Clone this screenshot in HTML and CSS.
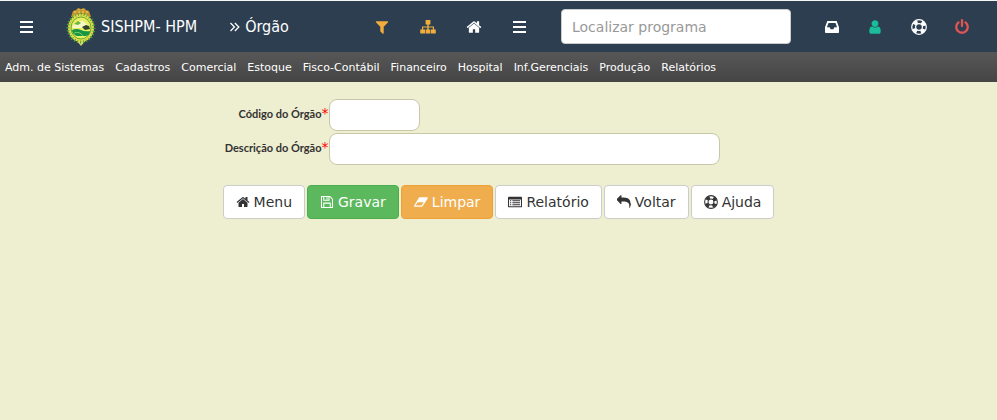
FILE: index.html
```html
<!DOCTYPE html>
<html lang="pt-BR">

<head>
    <meta charset="UTF-8">
    <meta name="viewport" content="width=device-width, initial-scale=1.0">
    <title>SISHPM - Órgão</title>
    <link rel="stylesheet" href="styles.css">
</head>

<body>
    <!-- icons -->
    <svg class="sprite" aria-hidden="true">
        <symbol id="i-bars" viewBox="0 0 16 16">
            <path d="M1 2h13v2H1zM1 7h13v2H1zM1 12h13v2H1z" />
        </symbol>
        <symbol id="i-angles" viewBox="0 0 16 16">
            <path d="M4 3.500l4.500 4.500L4 12.500M9 3.500l4.500 4.500L9 12.500" fill="none" stroke="currentColor" stroke-width="1.500" />
        </symbol>
        <symbol id="i-filter" viewBox="0 0 1792 1792">
            <path d="M1595 295q17 41-14 70l-493 493v742q0 42-39 59-13 5-25 5-27 0-45-19l-256-256q-19-19-19-45v-486l-493-493q-31-29-14-70 17-39 59-39h1280q42 0 59 39z" />
        </symbol>
        <symbol id="i-sitemap" viewBox="0 0 16 16">
            <path d="M5.600 1h4.800v4.600H8.700v1.800H14v3h1.800v4.100h-4.800v-4.100h1.800V8.600H8.700v1.800h1.700v4.100H5.600v-4.100h1.700V8.600H3.200v1.800H5v4.100H.2v-4.100H2v-3h5.300V5.600H5.600z" />
        </symbol>
        <symbol id="i-home" viewBox="0 0 1792 1792">
            <path d="M1472 992v480q0 26-19 45t-45 19h-384v-384h-256v384h-384q-26 0-45-19t-19-45v-480q0-1 .5-3t.5-3l575-474 575 474q1 2 1 6zm223-69l-62 74q-8 9-21 11h-3q-13 0-21-7l-692-577-692 577q-12 8-24 7-13-2-21-11l-62-74q-8-10-7-23.500t11-21.500l719-599q32-26 76-26t76 26l244 204v-195q0-14 9-23t23-9h192q14 0 23 9t9 23v408l219 182q10 8 11 21.500t-7 23.500z" />
        </symbol>
        <symbol id="i-inbox" viewBox="0 0 16 16">
            <path fill-rule="evenodd" d="M3.300 2h9.400l2.300 6.300V13.200q0 .8-.8.8H1.800q-.8 0-.8-.8V8.300zM4.500 4L2.900 8.300h2.700l1 2h2.800l1-2h2.700L11.500 4z" />
        </symbol>
        <symbol id="i-user" viewBox="0 0 1792 1792">
            <path d="M1536 1399q0 109-62.500 187t-150.500 78h-854q-88 0-150.500-78t-62.500-187q0-85 8.500-160.500t31.500-152 58.500-131 94-89 134.500-34.500q131 128 313 128t313-128q76 0 134.500 34.500t94 89 58.500 131 31.500 152 8.500 160.500zm-256-887q0 159-112.500 271.500t-271.500 112.500-271.500-112.500-112.500-271.500 112.500-271.500 271.500-112.500 271.500 112.500 112.500 271.500z" />
        </symbol>
        <symbol id="i-ring" viewBox="0 0 16 16">
            <g fill="none" stroke="currentColor">
                <circle cx="8" cy="8" r="7.300" stroke-width="1.200" />
                <circle cx="8" cy="8" r="3.400" stroke-width="1.200" />
                <circle cx="8" cy="8" r="5.400" stroke-width="3.400" stroke-dasharray="4.240 4.240" stroke-dashoffset="-2.120" />
            </g>
        </symbol>
        <symbol id="i-power" viewBox="0 0 1792 1792">
            <path d="M1664 896q0 156-61 298t-164 245-245 164-298 61-298-61-245-164-164-245-61-298q0-182 80.500-343t226.500-270q43-32 95.500-25t83.500 50q32 42 24.500 94.500t-49.500 84.500q-98 74-151.500 181t-53.500 228q0 104 40.500 198.500t109.500 163.500 163.500 109.500 198.500 40.500 198.500-40.500 163.500-109.500 109.500-163.500 40.500-198.500q0-121-53.500-228t-151.500-181q-42-32-49.500-84.500t24.500-94.500q31-43 84-50t95 25q146 109 226.500 270t80.500 343zm-640-768v640q0 52-38 90t-90 38-90-38-38-90v-640q0-52 38-90t90-38 90 38 38 90z" />
        </symbol>
        <symbol id="i-save" viewBox="0 0 16 16">
            <path d="M1.700 1.700h9.600l3 3v9.600H1.700zM4.300 14V9.300h7.400V14M4.300 2v4h6V2M8 2.500v2.500" fill="none" stroke="currentColor" stroke-width="1.200" />
        </symbol>
        <symbol id="i-eraser" viewBox="0 0 16 16">
            <path fill-rule="evenodd" d="M6.500 2.500h8.700q.9.200.6 1.200l-5.800 8.800q-.5.800-1.300.8H.8q-1-.3-.5-1.300l5.200-8.800q.4-.7 1-.7zM1.800 12.100h6.800l2.500-3.900H4.200z" />
        </symbol>
        <symbol id="i-list" viewBox="0 0 16 16">
            <path fill-rule="evenodd" d="M1 2h14q1 0 1 1v10q0 1-1 1H1q-1 0-1-1V3q0-1 1-1zM1.200 5v7.800h13.600V5z" />
            <path d="M2.300 6h1.400v1.200H2.300zM5 6h8.700v1.200H5zM2.300 8.300h1.400v1.200H2.300zM5 8.300h8.700v1.200H5zM2.300 10.600h1.400v1.200H2.300zM5 10.600h8.700v1.200H5z" />
        </symbol>
        <symbol id="i-reply" viewBox="0 0 1792 1792">
            <path d="M1792 1120q0 166-127 451-3 7-10.500 24t-13.500 30-13 22q-12 17-28 17-15 0-23.500-10t-8.500-25q0-9 2.500-26.500t2.500-23.500q5-68 5-123 0-112-19.500-200.500t-54-153.500-88.500-112-118.500-76.500-147.500-45.500-168.500-23-189.500-7h-224v256q0 26-19 45t-45 19-45-19l-512-512q-19-19-19-45t19-45l512-512q19-19 45-19t45 19 19 45v256h224q713 0 875 403 53 134 53 333z" />
        </symbol>
    </svg>

    <header class="topbar">
        <button class="icon-btn toggle" aria-label="Abrir menu"><svg class="icon"><use href="#i-bars" /></svg></button>

        <a class="brand" href="#">
            <svg class="crest" viewBox="0 0 30 38" aria-hidden="true">
                <path d="M5 9L7 3l3-1 2-2 3 1 3-1 2 2 3 1 2 6z" fill="#c9952c" />
                <path d="M9 8V3M13 8V1M17 8V1M21 8V3" stroke="#f4dc73" stroke-dasharray="2 1" />
                <path d="M10 32l5 6 5-6z" fill="#d8d86a" />
                <ellipse cx="15" cy="20" rx="13" ry="14" fill="#e4d94a" />
                <ellipse cx="15" cy="20" rx="13" ry="14" fill="none" stroke="#4aa63c" stroke-width="3" stroke-dasharray="1 2" />
                <ellipse cx="15" cy="20" rx="10" ry="11" fill="#e9ef62" stroke="#5fae35" />
                <path d="M6 19q4-7 11-6l6 5v2H6z" fill="#f6f7c6" />
                <path d="M8 16l4-3 3 2-3 2z" fill="#6fb63b" />
                <path d="M16 19l4-2 3 1 1 3-5 1z" fill="#30452a" />
                <path d="M6 22q5-2 9 0t9 1q0 4-4 5H11q-5-2-5-6z" fill="#179445" />
                <path d="M8 25q6-2 9 3" stroke="#78d164" fill="none" />
            </svg>
            <span>SISHPM- HPM</span>
        </a>

        <h1 class="program"><svg class="icon-small"><use href="#i-angles" /></svg>Órgão</h1>

        <nav class="shortcuts" aria-label="Atalhos">
            <button class="icon-btn gold" aria-label="Filtro"><svg class="icon"><use href="#i-filter" /></svg></button>
            <button class="icon-btn gold" aria-label="Estrutura"><svg class="icon"><use href="#i-sitemap" /></svg></button>
            <button class="icon-btn" aria-label="Início"><svg class="icon"><use href="#i-home" /></svg></button>
            <button class="icon-btn" aria-label="Lista"><svg class="icon"><use href="#i-bars" /></svg></button>
        </nav>

        <input class="search" type="text" placeholder="Localizar programa" aria-label="Localizar programa">

        <nav class="user-tools" aria-label="Usuário">
            <button class="icon-btn" aria-label="Mensagens"><svg class="icon"><use href="#i-inbox" /></svg></button>
            <button class="icon-btn green" aria-label="Perfil"><svg class="icon"><use href="#i-user" /></svg></button>
            <button class="icon-btn" aria-label="Suporte"><svg class="icon"><use href="#i-ring" /></svg></button>
            <button class="icon-btn red" aria-label="Sair"><svg class="icon"><use href="#i-power" /></svg></button>
        </nav>
    </header>

    <nav class="menu" aria-label="Menu principal">
        <a href="#">Adm. de Sistemas</a>
        <a href="#">Cadastros</a>
        <a href="#">Comercial</a>
        <a href="#">Estoque</a>
        <a href="#">Fisco-Contábil</a>
        <a href="#">Financeiro</a>
        <a href="#">Hospital</a>
        <a href="#">Inf.Gerenciais</a>
        <a href="#">Produção</a>
        <a href="#">Relatórios</a>
    </nav>

    <main>
        <form class="orgao-form">
            <div class="fields">
                <label for="codigo">Código do Órgão<span class="required">*</span></label>
                <input class="field field-code" type="text" id="codigo" name="codigo">
                <label for="descricao">Descrição do Órgão<span class="required">*</span></label>
                <input class="field" type="text" id="descricao" name="descricao">
            </div>

            <div class="actions">
                <button class="btn" type="button"><svg class="icon-small"><use href="#i-home" /></svg>Menu</button>
                <button class="btn btn-save" type="submit"><svg class="icon-small"><use href="#i-save" /></svg>Gravar</button>
                <button class="btn btn-clear" type="reset"><svg class="icon-small"><use href="#i-eraser" /></svg>Limpar</button>
                <button class="btn" type="button"><svg class="icon-small"><use href="#i-list" /></svg>Relatório</button>
                <button class="btn" type="button"><svg class="icon-small"><use href="#i-reply" /></svg>Voltar</button>
                <button class="btn" type="button"><svg class="icon-small"><use href="#i-ring" /></svg>Ajuda</button>
            </div>
        </form>
    </main>
</body>

</html>
```
FILE: styles.css
```css
* {
    margin: 0;
    padding: 0;
    box-sizing: border-box;
}

body {
    min-height: 100vh;
    background-color: #eeeed1;
    font-family: "DejaVu Sans", Verdana, sans-serif;
    font-size: 14px;
    color: #333;
}

a {
    color: inherit;
    text-decoration: none;
}

button,
input {
    font: inherit;
}

button {
    cursor: pointer;
}

svg {
    fill: currentColor;
    flex: none;
}

.sprite {
    display: none;
}

.icon {
    width: 16px;
    height: 16px;
}

.icon-small {
    width: 14px;
    height: 14px;
}

/* top bar */
.topbar {
    display: flex;
    align-items: center;
    height: 52px;
    padding: 0 13px 0 4px;
    border-top: 1px solid #f4f6f6;
    background-color: #2c3e50;
    color: white;
}

.icon-btn {
    display: flex;
    justify-content: center;
    align-items: center;
    flex: 1;
    height: 44px;
    border: none;
    background: none;
    color: white;
}

.toggle {
    flex: none;
    width: 46px;
}

.brand,
.program {
    display: flex;
    align-items: center;
    font-family: "DejaVu Sans Condensed", Tahoma, "DejaVu Sans", sans-serif;
    font-size: 16px;
    font-weight: normal;
    white-space: nowrap;
}

.brand {
    gap: 5px;
    margin-left: 16px;
}

.crest {
    width: 30px;
    height: 38px;
}

.program {
    gap: 4px;
    margin-left: 30px;
}

.shortcuts {
    display: flex;
    width: 184px;
    margin-left: auto;
}

.search {
    width: 230px;
    height: 35px;
    margin: 0 19px 0 18px;
    padding: 0 10px;
    border: 1px solid #ccc;
    border-radius: 4px;
    background-color: white;
    color: #555;
}

.search::placeholder {
    color: #999;
}

.user-tools {
    display: flex;
    width: 174px;
}

.gold {
    color: #f0ad3c;
}

.green {
    color: #1abc9c;
}

.red {
    color: #e15554;
}

/* menu */
.menu {
    display: flex;
    align-items: center;
    gap: 11px;
    height: 30px;
    padding: 0 5px;
    background: linear-gradient(#575757, #454545);
    color: white;
    font-size: 11px;
    white-space: nowrap;
}

/* form */
.orgao-form {
    max-width: 554px;
    margin: 0 auto;
    padding-top: 17px;
}

.fields {
    display: grid;
    grid-template-columns: 107px 391px;
    align-items: center;
    row-gap: 2px;
}

.fields label {
    padding-bottom: 5px;
    font-family: Lato, Calibri, sans-serif;
    font-size: 11px;
    font-weight: bold;
    text-align: right;
    white-space: nowrap;
}

.required {
    color: red;
    font-family: "DejaVu Sans", Verdana, sans-serif;
    font-size: 14px;
    font-weight: normal;
}

.field {
    width: 100%;
    height: 32px;
    padding: 4px 8px;
    border: 1px solid #c8c8a8;
    border-radius: 8px;
    background-color: white;
}

.field-code {
    width: 91px;
}

.actions {
    display: flex;
    justify-content: center;
    gap: 2px;
    margin-top: 20px;
}

.btn {
    display: flex;
    align-items: center;
    gap: 4px;
    height: 34px;
    padding: 0 12px;
    border: 1px solid #ccc;
    border-radius: 4px;
    background-color: white;
    color: #333;
    white-space: nowrap;
}

.btn-save {
    border-color: #4cae4c;
    background-color: #5cb85c;
    color: white;
}

.btn-clear {
    border-color: #eea236;
    background-color: #f0ad4e;
    color: white;
}
```
